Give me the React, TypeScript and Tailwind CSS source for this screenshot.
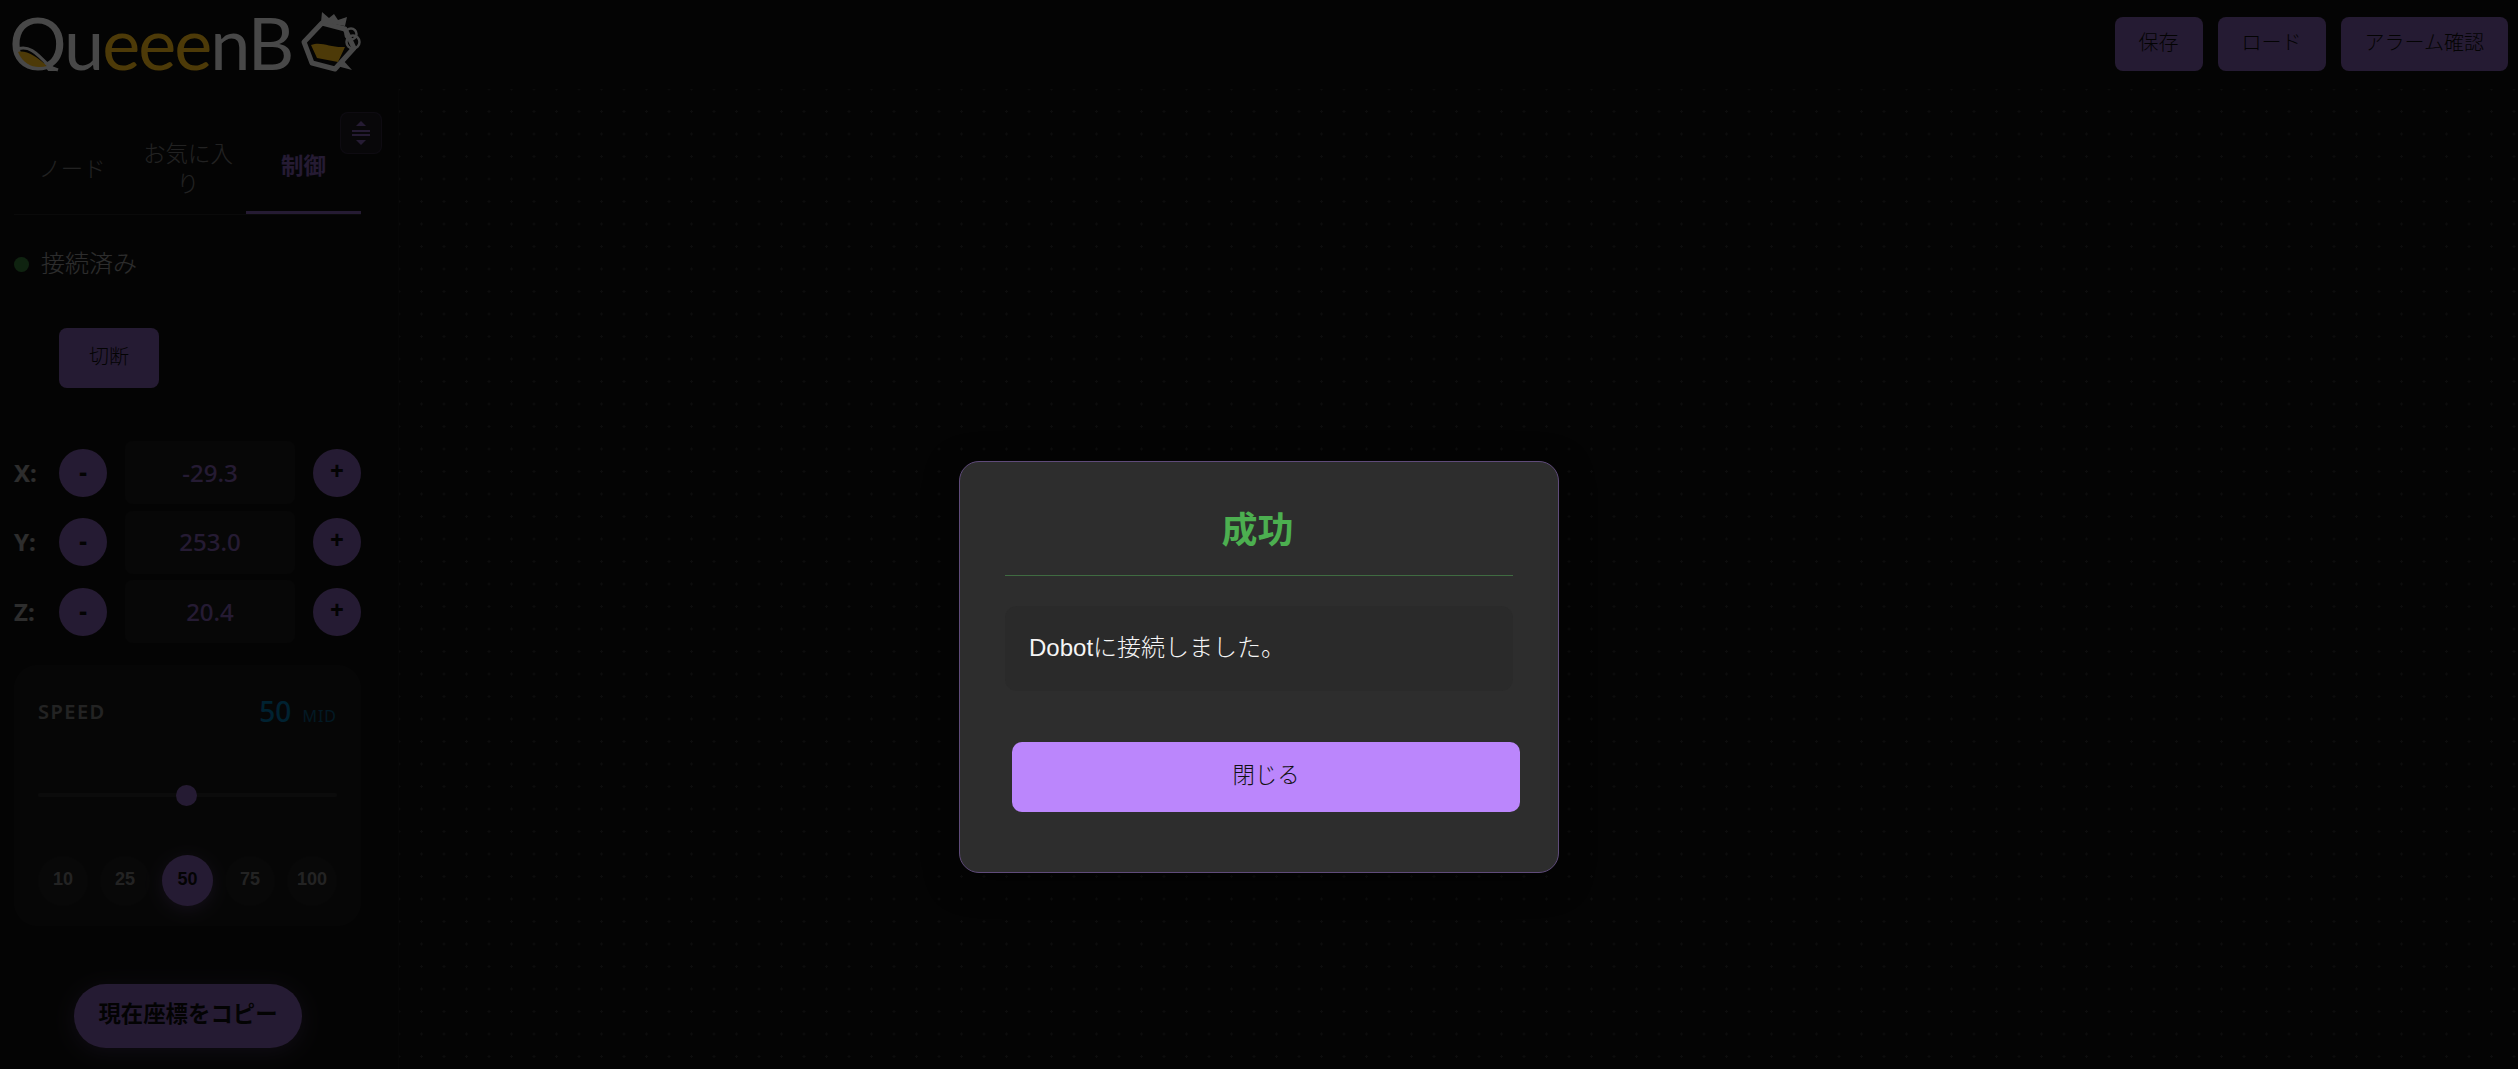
import { useState } from "react";

const cjk = "font-['Liberation_Sans','Noto_Sans_CJK_JP',sans-serif]";
const noto = "font-['Noto_Sans','Noto_Sans_CJK_JP',sans-serif]";

function Logo() {
  return (
    <div className="relative z-10 h-[89px] w-[398px] shrink-0">
      <div className="flex items-baseline pl-[9px] font-['Lato',sans-serif] text-[72px] leading-[84px] font-normal tracking-[-2px] [clip-path:inset(0_0_13px_0)]">
        <span className="text-[#484848]">Qu</span>
        <span className="text-[#4d3a08]">eee</span>
        <span className="text-[#484848]">nB</span>
      </div>
      {/* wave in the Q + the cup mark */}
      <svg className="absolute left-0 top-0" width="398" height="89" viewBox="0 0 398 89" fill="none">
        <path d="M18 52 C26 50 36 56 47 66 C36 69 24 66 18 52 Z" fill="#4d3a08" />
        <path d="M15 50 C28 44 36 52 50 67 L58 70" stroke="#484848" strokeWidth="3" />
        <path d="M322 23 L345 29 L354 48 L335 69 L312 63 L304 42 Z" stroke="#484848" strokeWidth="5" strokeLinejoin="round" />
        <path d="M311 45 C322 41 330 48 345 47 L338 62 L317 58 Z" fill="#4d3a08" />
        <path d="M321 22 L322 12 L329 18 L334 14 L338 20 L347 17 L345 26 Z" fill="#484848" />
        <circle cx="351" cy="34" r="5.5" stroke="#484848" strokeWidth="2.5" />
        <circle cx="353" cy="42" r="6.5" stroke="#484848" strokeWidth="2.5" />
        <path d="M342 59 L352 70 L337 66 Z" fill="#484848" />
      </svg>
    </div>
  );
}

function CoordRow({ axis, value }: { axis: string; value: string }) {
  return (
    <div className="flex items-center">
      <span className={`${noto} w-[45px] text-[24px] font-bold text-[#e0e0e0]`}>{axis}:</span>
      <button className={`${noto} flex size-12 items-center justify-center rounded-full bg-[#bb86fc] pb-[2px] text-[24px] font-extrabold leading-none text-[#121212]`}>-</button>
      <div className={`${noto} mx-[18px] flex h-[63px] w-[170px] items-center justify-center rounded-lg bg-[#242424] text-[24px] font-medium text-[#bb86fc]`}>
        {value}
      </div>
      <button className={`${noto} flex size-12 items-center justify-center rounded-full bg-[#bb86fc] pb-[4px] text-[24px] font-extrabold leading-none text-[#121212]`}>+</button>
    </div>
  );
}

export default function App() {
  const [speed] = useState(50);
  const presets = [10, 25, 50, 75, 100];

  return (
    <div className="relative flex h-[1069px] w-[2518px] overflow-hidden bg-[#181818]">
      {/* Sidebar */}
      <aside className="flex w-[398px] shrink-0 flex-col">
        <Logo />
        <div className="relative mx-[14px] flex h-[126px] w-[347px] border-b border-[#333]">
          <button className={`${cjk} flex w-[116px] items-center justify-center pt-[36px] text-[22.4px] font-light text-[#aaa]`}>ノード</button>
          <button className={`${cjk} flex w-[116px] items-center justify-center px-2 pt-[36px] text-[22.4px] leading-[30px] font-light text-[#aaa]`}>お気に入り</button>
          <button className={`${cjk} flex w-[115px] items-center justify-center border-b-[3px] border-[#bb86fc] pt-[33px] text-[22.4px] font-bold text-[#bb86fc]`}>制御</button>
          <button className="absolute left-[326px] top-[23px] flex size-[42px] items-center justify-center rounded-lg border border-[#bb86fc33] bg-[#bb86fc1a]">
            <svg width="20" height="24" viewBox="0 0 20 24" fill="#bb86fc">
              <path d="M10 0 L15 5 L5 5 Z" />
              <rect x="1" y="9" width="18" height="2" />
              <rect x="1" y="13" width="18" height="2" />
              <path d="M10 24 L15 19 L5 19 Z" />
            </svg>
          </button>
        </div>

        <div className="mx-[14px] mt-[31px] flex items-center gap-[12px]">
          <span className="size-[15px] rounded-full bg-[#4caf50]" />
          <span className={`${cjk} text-[24px] font-light text-[#e0e0e0]`}>接続済み</span>
        </div>

        <button className={`${cjk} ml-[59px] mt-[46px] flex h-[60px] w-[100px] items-center justify-center rounded-lg bg-[#bb86fc] pb-[2px] text-[20px] font-light text-[#121212]`}>切断</button>

        <div className="ml-[14px] mt-[53px] flex flex-col gap-[6.5px]">
          <CoordRow axis="X" value="-29.3" />
          <CoordRow axis="Y" value="253.0" />
          <CoordRow axis="Z" value="20.4" />
        </div>

        <div className="ml-[14px] mt-[22px] h-[261px] w-[347px] rounded-3xl bg-[#222222] px-[24px] pt-[22px]">
          <div className="flex items-baseline justify-between">
            <span className={`${noto} text-[20px] font-semibold tracking-[1.5px] text-[#b0b0b0]`}>SPEED</span>
            <span className={`${noto} relative top-[3px]`}>
              <span className="text-[28px] font-medium text-[#03a9f4]">{speed}</span>
              <span className="ml-[11px] text-[16px] tracking-[1px] text-[#03a9f4]/70">MID</span>
            </span>
          </div>
          <div className="relative mt-[56px] h-[21px]">
            <div className="absolute inset-x-0 top-[8px] h-[4px] rounded bg-[#3a3a3a]" />
            <div className="absolute left-[138px] top-0 size-[21px] rounded-full bg-[#bb86fc]" />
          </div>
          <div className="mt-[49px] flex items-center justify-between">
            {presets.map((p) =>
              p === speed ? (
                <button key={p} className="flex size-[51px] items-center justify-center rounded-full bg-[#bb86fc] pb-[2px] font-['Liberation_Sans',sans-serif] text-[18px] font-bold text-[#121212] shadow-[0_4px_16px_#bb86fc66]">
                  {p}
                </button>
              ) : (
                <button key={p} className="flex size-[50px] items-center justify-center rounded-full bg-[#282828] pb-[2px] font-['Liberation_Sans',sans-serif] text-[18px] font-bold text-[#b0b0b0]">
                  {p}
                </button>
              )
            )}
          </div>
        </div>

        <button className={`${cjk} ml-[74px] mt-[58px] flex h-[64px] w-[228px] items-center justify-center rounded-full bg-[#bb86fc] pb-[2px] text-[22.4px] font-bold text-[#121212] shadow-[0_4px_20px_#bb86fc55]`}>
          現在座標をコピー
        </button>
      </aside>

      {/* Canvas */}
      <main className="flex min-w-0 flex-1 flex-col">
        <header className="flex h-[89px] shrink-0 justify-end gap-[15px] pr-[10px] pt-[17px]">
          {["保存", "ロード", "アラーム確認"].map((label) => (
            <button key={label} className={`${cjk} h-[54px] rounded-lg bg-[#bb86fc] px-[24px] pb-[2px] text-[20px] font-light text-[#121212]`}>
              {label}
            </button>
          ))}
        </header>
        <div className="flex-1 border-l border-[#222] bg-[radial-gradient(circle,#444_1.2px,transparent_1.3px)] bg-[size:22.5px_22.5px] bg-[position:-11.25px_-11.25px]" />
      </main>

      {/* Dialog overlay */}
      <div className="absolute inset-0 flex justify-center bg-black/80 pt-[461px]">
        <div className="h-[412px] w-[600px] rounded-[20px] border border-[#5f4b7a] bg-[#2d2d2d] px-[45px] pt-[30px] shadow-[0_8px_32px_#00000080]">
          <h2 className={`${cjk} h-[84px] border-b border-[#3f6b41] pr-[3px] text-center text-[36px] leading-[78px] font-bold text-[#4caf50]`}>成功</h2>
          <p className={`${cjk} mt-[30px] h-[85px] rounded-xl bg-[#2a2a2a] px-[24px] pt-[24px] text-[24px] leading-[36px] font-light text-[#f5f5f5]`}>
            Dobotに接続しました。
          </p>
          <button className={`${cjk} ml-[7px] mt-[51px] h-[70px] w-[508px] rounded-[10px] bg-[#bb86fc] pb-[2px] text-[22.4px] font-light text-[#121212]`}>
            閉じる
          </button>
        </div>
      </div>
    </div>
  );
}
